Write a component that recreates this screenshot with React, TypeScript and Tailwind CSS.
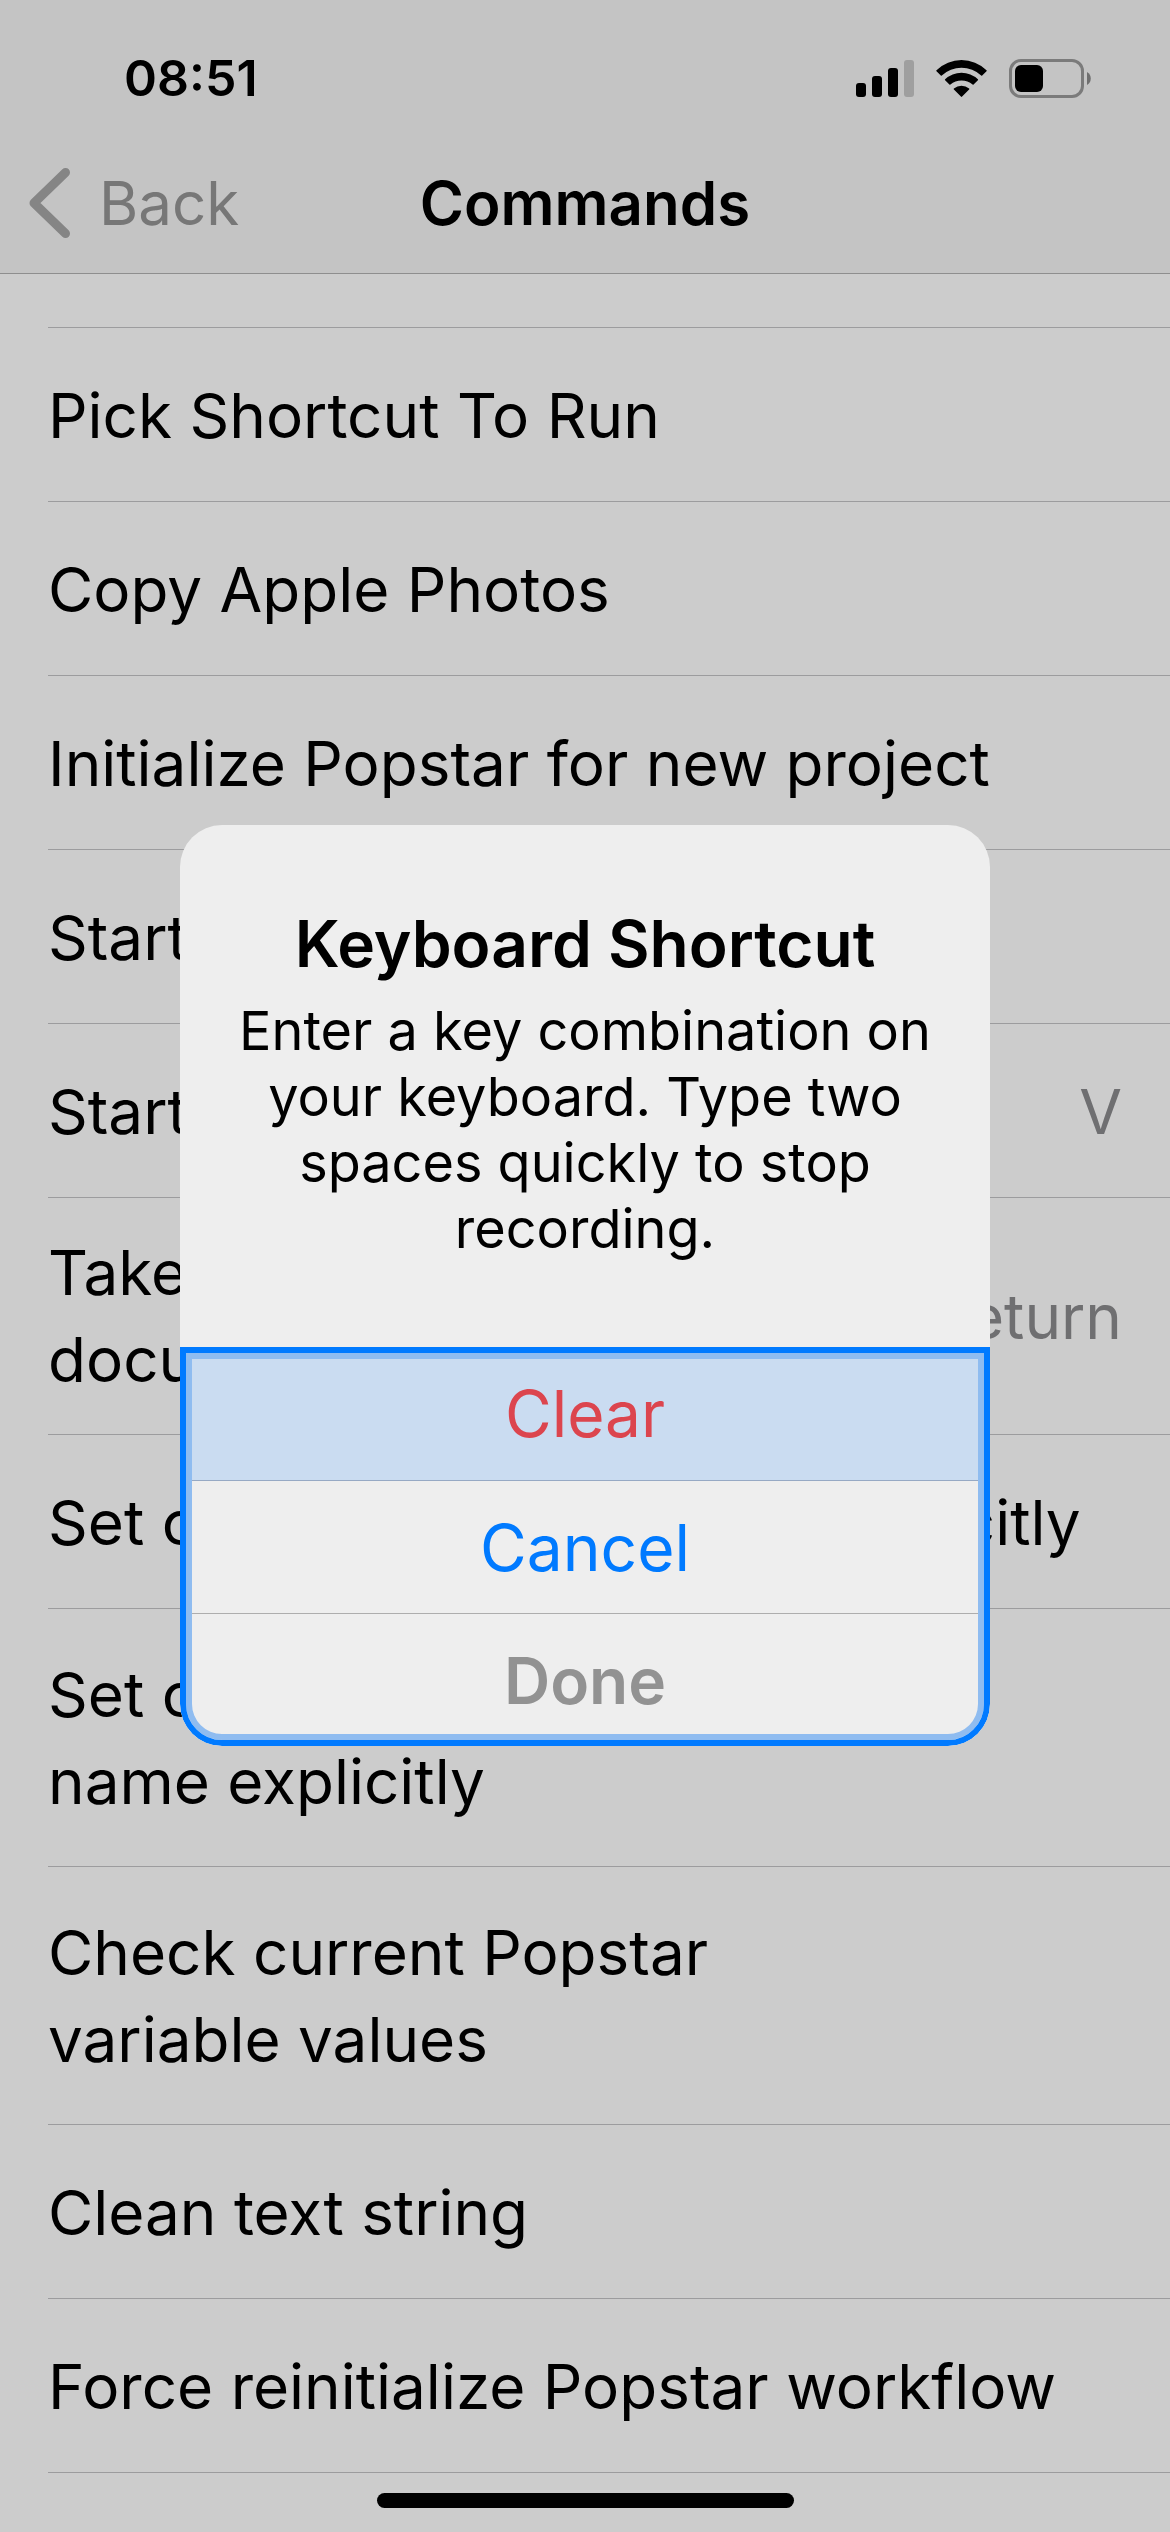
import React from "react";

type Command = {
  title: string;
  shortcut?: string;
  padding?: string;
};

const commands: Command[] = [
  { title: "Pick Shortcut To Run" },
  { title: "Copy Apple Photos" },
  { title: "Initialize Popstar for new project" },
  { title: "Start recording" },
  { title: "Start project", shortcut: "V" },
  { title: "Take note in\ndocument", shortcut: "Return", padding: "py-[31px]" },
  { title: "Set current document line explicitly" },
  { title: "Set current document\nname explicitly" },
  { title: "Check current Popstar\nvariable values" },
  { title: "Clean text string" },
  { title: "Force reinitialize Popstar workflow" },
];

function SignalIcon() {
  return (
    <svg className="h-[37px] w-[58px]" viewBox="0 0 58 37" aria-hidden="true">
      <rect x="0" y="23" width="10" height="14" rx="3" />
      <rect x="16" y="16" width="10" height="21" rx="3" />
      <rect x="32" y="8" width="10" height="29" rx="3" />
      <rect x="48" y="0" width="10" height="37" rx="3" fill="#9f9f9f" />
    </svg>
  );
}

function WifiIcon() {
  return (
    <svg className="h-[37px] w-[51px]" viewBox="0 0 51 37" aria-hidden="true">
      <path d="M0.5 10.2 A36 36 0 0 1 50.5 10.2 Q51 10.8 50.5 11.3 L46.2 15.6 Q45.7 16 45.2 15.5 A29 29 0 0 0 5.8 15.5 Q5.3 16 4.8 15.6 L0.5 11.3 Q0 10.8 0.5 10.2 Z" />
      <path d="M9.1 19.3 A24 24 0 0 1 41.9 19.3 Q42.4 19.8 41.9 20.3 L37.6 24.6 Q37.1 25 36.6 24.6 A17 17 0 0 0 14.4 24.6 Q13.9 25 13.4 24.6 L9.1 20.3 Q8.6 19.8 9.1 19.3 Z" />
      <path d="M17.9 28.4 A12 12 0 0 1 33.1 28.4 Q33.6 29 33.1 29.5 L26.1 36.6 Q25.5 37.2 24.9 36.6 L17.9 29.5 Q17.4 29 17.9 28.4 Z" />
    </svg>
  );
}

function BatteryIcon() {
  return (
    <svg className="h-[39px] w-[82px]" viewBox="0 0 82 39" aria-hidden="true">
      <rect x="1.5" y="1.5" width="72" height="36" rx="10.5" fill="none" stroke="#7b7b7b" strokeWidth="3" />
      <rect x="6" y="6" width="28" height="27" rx="6" />
      <path d="M78 13 A7.5 7.5 0 0 1 78 26 Z" fill="#6f6f6f" />
    </svg>
  );
}

function Header() {
  return (
    <header className="border-b border-[#8e8e8e] bg-[#c4c4c4]">
      <div className="flex h-[156px] items-center justify-between pr-[79px] pl-[124px]">
        <span className="text-[50px] leading-[60px] font-semibold">08:51</span>
        <div className="flex items-center gap-[22px]">
          <SignalIcon />
          <WifiIcon />
          <BatteryIcon />
        </div>
      </div>
      <div className="grid h-[117px] grid-cols-[1fr_auto_1fr] items-start px-[29px] text-[60px] leading-[94px]">
        <button type="button" className="flex items-center gap-[29px] justify-self-start text-[#777777]">
          <svg className="h-[70px] w-[41px]" viewBox="0 0 41 70" fill="none" aria-hidden="true">
            <path d="M36.5 4.5 L5 35 L36.5 65.5" stroke="#858585" strokeWidth="9" strokeLinecap="round" strokeLinejoin="round" />
          </svg>
          Back
        </button>
        <h1 className="font-semibold">Commands</h1>
      </div>
    </header>
  );
}

function CommandRow({ title, shortcut, padding = "pt-[42px] pb-[41px]" }: Command) {
  return (
    <li className="ml-12 border-b border-[#9c9c9e]">
      <button
        type="button"
        className={`flex min-h-[173px] w-full items-center justify-between gap-12 pr-12 text-left ${padding}`}
      >
        <span className="whitespace-pre-line">{title}</span>
        {shortcut && <span className="text-[#6f6f71]">{shortcut}</span>}
      </button>
    </li>
  );
}

function ShortcutDialog() {
  return (
    <div className="fixed inset-0 flex items-center justify-center pt-[39px]">
      <section
        role="dialog"
        aria-modal="true"
        aria-labelledby="dialog-title"
        aria-describedby="dialog-text"
        className="w-[810px] overflow-hidden rounded-[42px] bg-[#eeeeee] text-center"
      >
        <div className="px-12 pt-[75px] pb-[85px]">
          <h2 id="dialog-title" className="text-[64px] leading-[87px] font-semibold">
            Keyboard Shortcut
          </h2>
          <p id="dialog-text" className="mt-[11px] text-[54px] leading-[66px]">
            Enter a key combination on your keyboard. Type two spaces quickly to stop recording.
          </p>
        </div>
        <div className="relative text-[64px] leading-[87px]">
          <button type="button" className="block h-[134px] w-full border-b border-[#96a9c4] bg-[#cadcf1] text-[#dc454e]">
            Clear
          </button>
          <button type="button" className="block h-[133px] w-full border-b border-[#adadad] text-[#007aff]">
            Cancel
          </button>
          <button type="button" disabled className="block h-[132px] w-full font-semibold text-[#929292]">
            Done
          </button>
          <div className="pointer-events-none absolute inset-0 rounded-b-[42px] border-[6px] border-[#007aff] shadow-[inset_0_0_0_6px_#8fbcf0]" />
        </div>
      </section>
    </div>
  );
}

export default function App() {
  return (
    <div className="min-h-screen bg-[#cccccc] font-['Inter','Liberation_Sans',sans-serif] text-black">
      <Header />
      <main>
        <ul className="text-[62px] leading-[87px]">
          <li className="ml-12 h-[54px] border-b border-[#9c9c9e]" aria-hidden="true" />
          {commands.map((command) => (
            <CommandRow key={command.title} {...command} />
          ))}
        </ul>
      </main>
      <footer className="flex justify-center pt-5 pb-6">
        <div className="h-[15px] w-[417px] rounded-full bg-black" />
      </footer>
      <ShortcutDialog />
    </div>
  );
}
